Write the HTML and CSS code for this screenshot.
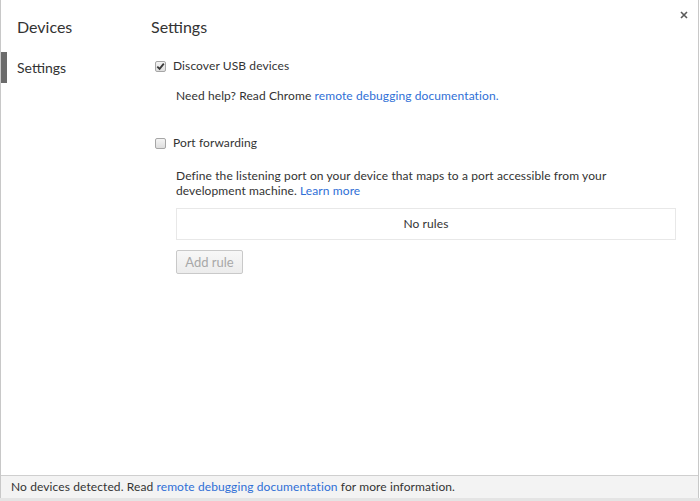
FILE: index.html
```html
<!DOCTYPE html>
<html>
<head>
<meta charset="utf-8">
<link rel="stylesheet" href="styles.css">
</head>
<body>
<div class="dialog">
  <div class="main">
    <div class="sidebar">
      <h2 class="title">Devices</h2>
      <div class="nav-item selected">Settings</div>
    </div>
    <div class="content">
      <h2 class="title">Settings</h2>
      <div class="check-row">
        <span class="checkbox checked">
          <svg width="9" height="9" viewBox="0 0 9 9"><path d="M1.3 4.6 L3.6 6.9 L7.8 1.6" fill="none" stroke="#3a3a3a" stroke-width="1.8"/></svg>
        </span>
        <span class="check-label">Discover USB devices</span>
      </div>
      <p class="help">Need help? Read Chrome <a class="link">remote debugging documentation.</a></p>
      <div class="check-row port">
        <span class="checkbox"></span>
        <span class="check-label">Port forwarding</span>
      </div>
      <p class="desc">Define the listening port on your device that maps to a port accessible from your<br>development machine. <a class="link">Learn more</a></p>
      <div class="rules">No rules</div>
      <button class="add-rule" disabled>Add rule</button>
    </div>
    <div class="close">
      <svg width="8" height="8" viewBox="0 0 8 8"><path d="M1 1 L7 7 M7 1 L1 7" stroke="#5a5a5a" stroke-width="1.6"/></svg>
    </div>
  </div>
  <div class="footer">No devices detected. Read <a class="link">remote debugging documentation</a> for more information.</div>
</div>
<div class="underlay"></div>
</body>
</html>
```

FILE: styles.css
```css
html, body {
  margin: 0;
  padding: 0;
  background: #ffffff;
}
body {
  font-family: Lato, "Liberation Sans", sans-serif;
  font-size: 12px;
  letter-spacing: 0.1px;
  color: #333;
  width: 700px;
  height: 501px;
  overflow: hidden;
}
.dialog {
  width: 699px;
  height: 498px;
  box-sizing: border-box;
  border-left: 1px solid #c8c8c8;
  border-right: 1px solid #c8c8c8;
  display: flex;
  flex-direction: column;
  background: #fff;
}
.main {
  flex: 1;
  display: flex;
  position: relative;
}
.sidebar {
  width: 150px;
  flex: none;
}
.title {
  margin: 0;
  padding-top: 17px;
  font-size: 16px;
  font-weight: normal;
  line-height: 20px;
  letter-spacing: 0;
  color: #333;
}
.sidebar .title {
  padding-left: 16px;
}
.nav-item {
  margin-top: 15px;
  height: 31px;
  line-height: 31px;
  font-size: 14px;
  letter-spacing: 0;
  padding-left: 10px;
  border-left: 6px solid transparent;
  color: #333;
}
.nav-item.selected {
  border-left-color: #6b6b6b;
}
.content {
  flex: 1;
}
.check-row {
  margin-top: 21px;
  height: 16px;
  display: flex;
  align-items: center;
  line-height: 16px;
}
.check-row.port {
  margin-top: 31px;
}
.checkbox {
  width: 11px;
  height: 11px;
  box-sizing: border-box;
  margin-left: 4px;
  margin-right: 7px;
  border: 1px solid #a6a6a6;
  border-radius: 2px;
  background: linear-gradient(#f4f4f4, #dedede);
  display: flex;
  align-items: center;
  justify-content: center;
}
.checkbox svg {
  display: block;
}
.help {
  margin: 14px 0 0 25px;
  line-height: 16px;
}
.desc {
  margin: 17px 0 0 25px;
  line-height: 15px;
}
.link {
  color: #2f6fd6;
  text-decoration: none;
}
.rules {
  margin: 10px 0 0 25px;
  width: 500px;
  height: 32px;
  box-sizing: border-box;
  border: 1px solid #e8e8e8;
  line-height: 30px;
  text-align: center;
}
.add-rule {
  display: block;
  margin: 10px 0 0 25px;
  width: 67px;
  height: 24px;
  box-sizing: border-box;
  border: 1px solid #c9c9c9;
  border-radius: 2px;
  background: linear-gradient(#f7f7f7, #ececec);
  font-family: inherit;
  font-size: 13px;
  color: #a8a8a8;
  padding: 0;
}
.close {
  position: absolute;
  top: 11px;
  left: 679px;
}
.close svg {
  display: block;
}
.footer {
  flex: none;
  height: 23px;
  box-sizing: border-box;
  border-top: 1px solid #cfcfcf;
  background: #f3f3f3;
  line-height: 22px;
  padding-left: 10px;
  color: #333;
}
.underlay {
  height: 3px;
  background: #e4e4e4;
}
```
